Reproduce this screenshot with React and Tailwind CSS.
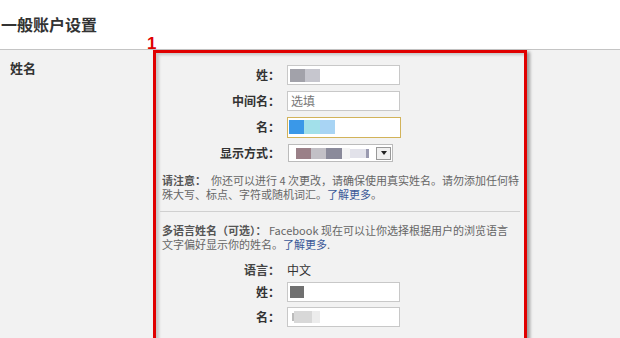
export default function App() {
  const label = "w-[124px] shrink-0 text-right text-[12px] font-bold text-[#333] leading-none";
  const input = "ml-[7px] w-[113px] h-[20px] bg-white border border-[#c8c8c8] flex items-center";
  return (
    <div className="relative w-[620px] h-[338px] overflow-hidden bg-white font-['Noto_Sans_CJK_SC','Liberation_Sans',sans-serif]">
      <div className="h-[50px] border-b border-[#c4c4c4] pl-[1px] pt-[13px] text-[16px] leading-[22px] font-bold text-[#333]">
        一般账户设置
      </div>
      <div className="flex bg-[#f2f2f2] h-[300px]">
        <div className="w-[153px] shrink-0 pl-[10px] pt-[10px] text-[13px] font-bold text-[#333] leading-[16px]">
          姓名
        </div>
        <div className="w-[374px] h-[320px] shrink-0 border-[3px] border-[#e00000] shadow-[3px_2px_3px_rgba(0,0,0,0.35),inset_3px_2px_3px_rgba(0,0,0,0.18)] pt-[9px]">
          <div className="flex items-center h-[26px]">
            <div className={label}>姓：</div>
            <div className={input}>
              <div className="ml-[2px] w-[15px] h-[13px] bg-[#a2a2aa]" />
              <div className="w-[15px] h-[13px] bg-[#c6c6ce]" />
            </div>
          </div>
          <div className="flex items-center h-[26px]">
            <div className={label}>中间名：</div>
            <div className={input}>
              <span className="ml-[3px] text-[12px] text-[#777] leading-none">选填</span>
            </div>
          </div>
          <div className="flex items-center h-[26px]">
            <div className={label}>名：</div>
            <div className="ml-[7px] w-[114px] h-[21px] bg-white border border-[#d2b35a] flex items-center">
              <div className="ml-[1px] w-[15px] h-[14px] bg-[#3a98e8]" />
              <div className="w-[16px] h-[14px] bg-[#a2e0ea]" />
              <div className="w-[15px] h-[14px] bg-[#a8d4f4]" />
            </div>
          </div>
          <div className="flex items-center h-[26px]">
            <div className={label}>显示方式：</div>
            <div className="ml-[8px] w-[105px] h-[18px] bg-white border border-[#bbbbbb] flex items-center">
              <div className="ml-[7px] w-[15px] h-[11px] bg-[#9a8088]" />
              <div className="w-[15px] h-[11px] bg-[#c2c0c6]" />
              <div className="w-[16px] h-[11px] bg-[#8a8a9a]" />
              <div className="w-[8px] h-[11px] bg-[#f4f4f4]" />
              <div className="w-[16px] h-[9px] bg-[#e2e2ea]" />
              <div className="w-[3px] h-[9px] bg-[#9a9ab0]" />
              <div className="ml-auto mr-[1px] w-[15px] h-[13px] border border-[#999] bg-[#f0f0f0] flex items-center justify-center">
                <div className="w-0 h-0 border-l-[3px] border-r-[3px] border-t-[4px] border-l-transparent border-r-transparent border-t-[#222]" />
              </div>
            </div>
          </div>
          <div className="mt-[7px] pl-[6px] text-[11px] leading-[14px] text-[#666]">
            <span className="font-bold text-[#555]">请注意：</span>&nbsp; 你还可以进行 4 次更改，请确保使用真实姓名。请勿添加任何特
            <br />
            殊大写、标点、字符或随机词汇。<span className="text-[#3b5998]">了解更多</span>。
          </div>
          <div className="mt-[10px] mx-[4px] border-t border-[#d0d0d0]" />
          <div className="mt-[11px] pl-[6px] text-[11px] leading-[14px] text-[#666]">
            <span className="font-bold text-[#555]">多语言姓名（可选）：</span>&nbsp;Facebook 现在可以让你选择根据用户的浏览语言
            <br />
            文字偏好显示你的姓名。<span className="text-[#3b5998]">了解更多</span>.
          </div>
          <div className="mt-[10px] flex items-center h-[18px]">
            <div className="w-[124px] shrink-0 text-right text-[12px] font-bold text-[#444] leading-none">语言：</div>
            <div className="ml-[7px] text-[12px] text-[#333] leading-none">中文</div>
          </div>
          <div className="flex items-center h-[25px]">
            <div className={label}>姓：</div>
            <div className={input}>
              <div className="ml-[2px] w-[14px] h-[12px] bg-[#707070]" />
            </div>
          </div>
          <div className="flex items-center h-[25px]">
            <div className={label}>名：</div>
            <div className={input}>
              <div className="ml-[4px] w-[2px] h-[8px] bg-[#bbb]" />
              <div className="w-[18px] h-[12px] bg-[#d8d8d8]" />
              <div className="w-[8px] h-[12px] bg-[#ececec]" />
            </div>
          </div>
        </div>
      </div>
      <div className="absolute left-[147px] top-[35px] text-[17px] leading-none font-bold text-[#e00000] font-['Liberation_Sans',sans-serif]">
        1
      </div>
    </div>
  );
}
